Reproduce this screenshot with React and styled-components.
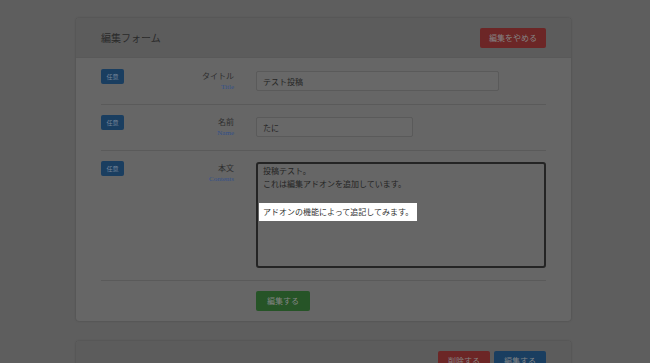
import React from "react";
import styled, { createGlobalStyle } from "styled-components";

const Global = createGlobalStyle`
  html, body { margin: 0; padding: 0; background: #5e5e5e; }
  body { font-family: "Noto Sans CJK JP", "Noto Sans", sans-serif; color: #232323; }
  * { box-sizing: border-box; }
`;

const Page = styled.div`
  width: 650px;
  height: 363px;
  overflow: hidden;
  padding: 18px 79px 0 76px;
  display: flex;
  flex-direction: column;
  gap: 20px;
  background: #5e5e5e;
`;

const Card = styled.section`
  background: #666666;
  border-radius: 3px;
  box-shadow: 0 0 2px rgba(0, 0, 0, 0.25);
  flex-shrink: 0;
`;

const CardHeader = styled.header`
  height: 40px;
  padding: 0 25px;
  display: flex;
  align-items: center;
  justify-content: ${(p) => (p.$end ? "flex-end" : "space-between")};
  gap: 4px;
  background: #5c5c5c;
  border-radius: 3px 3px 0 0;
  border-bottom: 1px solid #595959;
`;

const CardTitle = styled.h2`
  margin: 0;
  font-size: 10px;
  font-weight: 400;
  color: #2a2a2a;
`;

const Button = styled.button`
  height: 20px;
  padding: 0 ${(p) => p.$px || 9}px;
  border: none;
  border-radius: 2px;
  font-family: inherit;
  font-size: 8px;
  line-height: 20px;
  color: #858585;
  background: ${(p) =>
    p.$tone === "red" ? "#6c2626" : p.$tone === "green" ? "#265427" : "#1a3e60"};
  display: inline-flex;
  align-items: center;
`;

const CardBody = styled.div`
  padding: 0 25px;
`;

const Row = styled.div`
  display: grid;
  grid-template-columns: 134px 1fr;
  column-gap: 21px;
  align-items: start;
  padding: ${(p) => p.$pt || 11}px 0 ${(p) => p.$pb || 13}px;
  border-bottom: 1px solid #5a5a5a;
`;

const LabelCell = styled.div`
  display: flex;
  justify-content: space-between;
  align-items: flex-start;
  height: 22px;
`;

const Badge = styled.span`
  display: inline-flex;
  align-items: center;
  justify-content: center;
  width: 23px;
  height: 15px;
  border-radius: 2px;
  background: #1a3e60;
  color: #76859a;
  font-size: 6px;
  line-height: 1;
`;

const LabelText = styled.div`
  text-align: right;
  padding-top: 1px;
  padding-right: 1px;
`;

const LabelMain = styled.div`
  font-size: 8px;
  line-height: 11px;
  color: #2e2e2e;
`;

const LabelSub = styled.div`
  font-family: "Liberation Serif", serif;
  font-size: 7px;
  line-height: 9px;
  margin-top: 2px;
  color: #33508a;
`;

const TextInput = styled.div`
  margin-top: 2px;
  width: ${(p) => p.$w}px;
  height: 20px;
  padding: 0 6px;
  display: flex;
  align-items: center;
  font-size: 8px;
  color: #242424;
  background: #686868;
  border: 1px solid #5a5a5a;
  border-radius: 2px;
`;

const TextArea = styled.div`
  margin-top: 1px;
  width: 290px;
  height: 106px;
  padding: 1px 5px;
  font-size: 8px;
  line-height: 12.6px;
  color: #242424;
  background: #666;
  border: 2px solid #242424;
  border-radius: 3px;
`;

const Line = styled.div`
  min-height: 12.6px;
`;

const Highlight = styled.span`
  display: inline-block;
  margin: 0 0 0 -4px;
  padding: 3px 4px;
  background: #ffffff;
  color: #333;
`;

const Footer = styled.div`
  display: flex;
  padding: 10px 0 10px 155px;
`;

export default function App() {
  return (
    <>
      <Global />
      <Page>
        <Card>
          <CardHeader>
            <CardTitle>編集フォーム</CardTitle>
            <Button $tone="red" $px={9}>編集をやめる</Button>
          </CardHeader>
          <CardBody>
            <Row>
              <LabelCell>
                <Badge>任意</Badge>
                <LabelText>
                  <LabelMain>タイトル</LabelMain>
                  <LabelSub>Title</LabelSub>
                </LabelText>
              </LabelCell>
              <TextInput $w={243}>テスト投稿</TextInput>
            </Row>
            <Row $pt={10} $pb={13}>
              <LabelCell>
                <Badge>任意</Badge>
                <LabelText>
                  <LabelMain>名前</LabelMain>
                  <LabelSub>Name</LabelSub>
                </LabelText>
              </LabelCell>
              <TextInput $w={157}>たに</TextInput>
            </Row>
            <Row $pt={10} $pb={12}>
              <LabelCell>
                <Badge>任意</Badge>
                <LabelText>
                  <LabelMain>本文</LabelMain>
                  <LabelSub>Contents</LabelSub>
                </LabelText>
              </LabelCell>
              <TextArea>
                <Line>投稿テスト。</Line>
                <Line>これは編集アドオンを追加しています。</Line>
                <Line />
                <Line>
                  <Highlight>アドオンの機能によって追記してみます。</Highlight>
                </Line>
              </TextArea>
            </Row>
            <Footer>
              <Button $tone="green" $px={11}>編集する</Button>
            </Footer>
          </CardBody>
        </Card>
        <Card>
          <CardHeader $end>
            <Button $tone="red" $px={10}>削除する</Button>
            <Button $tone="blue" $px={10}>編集する</Button>
          </CardHeader>
        </Card>
      </Page>
    </>
  );
}
